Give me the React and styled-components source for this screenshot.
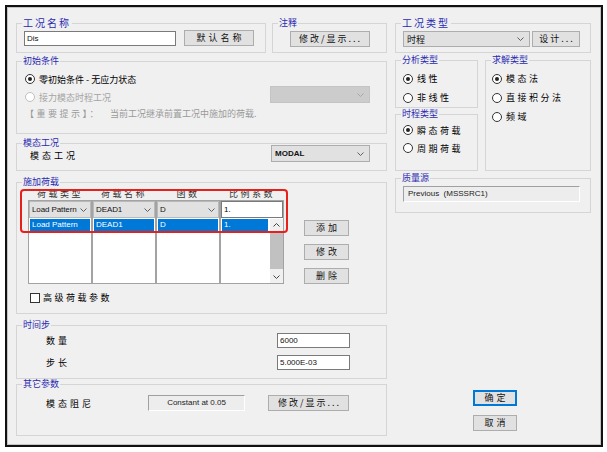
import React from "react";
import styled, { createGlobalStyle } from "styled-components";

const CJK = `"Noto Sans CJK SC", "Noto Sans CJK JP", sans-serif`;
const LATIN = `"Liberation Sans", Arial, sans-serif`;

const GlobalStyle = createGlobalStyle`
  html, body {
    margin: 0;
    padding: 0;
    background: #fff;
  }
  body {
    font-family: ${CJK};
    font-size: 9px;
    color: #000;
  }
`;

const Dialog = styled.div`
  box-sizing: border-box;
  margin: 5px 0 0 5px;
  width: 598px;
  height: 442px;
  border: 2px solid #111;
  box-shadow: inset 0 0 0 1px #c4c4c4;
  background: #f0f0f0;
  padding: 10px 10px 0 9px;
  display: grid;
  grid-template-columns: 371px 196px;
  column-gap: 8px;
  align-items: start;
`;

const Column = styled.div`
  display: flex;
  flex-direction: column;
`;

const Row = styled.div`
  display: flex;
  gap: ${(p) => p.$gap || 0}px;
  margin-top: ${(p) => p.$mt || 0}px;
`;

// group box = fieldset with its blue caption
const Group = styled.fieldset`
  box-sizing: border-box;
  position: relative;
  margin: ${(p) => p.$mt || 0}px 0 0;
  padding: 0;
  border: 1px solid #d5d5d5;
  min-width: 0;
  width: ${(p) => (p.$w ? `${p.$w}px` : "auto")};
  height: ${(p) => p.$h}px;
`;

const Legend = styled.legend`
  padding: 0 1px;
  margin-left: 5px;
  font-family: ${CJK};
  font-size: ${(p) => (p.$big ? 10 : 9)}px;
  letter-spacing: ${(p) => (p.$spaced ? 2 : 0)}px;
  line-height: 12px;
  color: #2a2ab0;
`;

const Body = styled.div`
  display: flex;
  flex-direction: ${(p) => p.$dir || "row"};
  align-items: ${(p) => p.$align || "center"};
  justify-content: ${(p) => p.$justify || "flex-start"};
  gap: ${(p) => p.$gap || 0}px;
  padding: ${(p) => p.$pad || "0"};
  margin-top: ${(p) => p.$mt || 0}px;
`;

const Button = styled.button`
  box-sizing: border-box;
  width: ${(p) => p.$w}px;
  height: 16px;
  padding: 0 0 0 ${(p) => p.$ls ?? 3}px;
  background: #e1e1e1;
  border: 1px solid ${(p) => (p.$default ? "#0078d7" : "#adadad")};
  box-shadow: ${(p) => (p.$default ? "inset 0 0 0 1px #0078d7" : "none")};
  font-family: ${CJK};
  font-size: 9px;
  letter-spacing: ${(p) => p.$ls ?? 3}px;
  line-height: 14px;
  color: #111;
  white-space: nowrap;
`;

const TextInput = styled.input`
  box-sizing: border-box;
  width: ${(p) => p.$w}px;
  height: 15px;
  padding: 0 2px;
  margin: 0;
  background: #fff;
  border: 1px solid #7a7a7a;
  font-family: ${LATIN};
  font-size: 8px;
  color: #111;
  outline: none;
`;

const SelectBox = styled.div`
  box-sizing: border-box;
  width: ${(p) => (p.$w ? `${p.$w}px` : "100%")};
  height: ${(p) => p.$h || 17}px;
  margin-top: ${(p) => p.$mt || 0}px;
  display: flex;
  align-items: center;
  justify-content: space-between;
  padding: 0 5px 0 3px;
  background: ${(p) => (p.$disabled ? "#cccccc" : "#e1e1e1")};
  border: 1px solid ${(p) => (p.$disabled ? "#c4c4c4" : "#adadad")};
  font-family: ${(p) => (p.$cjk ? CJK : LATIN)};
  font-size: ${(p) => (p.$cjk ? 9 : 8)}px;
  font-weight: ${(p) => (p.$bold ? "bold" : "normal")};
  color: #111;
  white-space: nowrap;
`;

const Chevron = ({ up, color = "#606060" }) => (
  <svg width="7" height="4" viewBox="0 0 7 4" style={{ flex: "none" }}>
    <path
      d={up ? "M0.5 3.5 L3.5 0.5 L6.5 3.5" : "M0.5 0.5 L3.5 3.5 L6.5 0.5"}
      fill="none"
      stroke={color}
      strokeWidth="1"
    />
  </svg>
);

const Select = ({ children, disabled, ...rest }) => (
  <SelectBox $disabled={disabled} {...rest}>
    <span>{children}</span>
    <Chevron color={disabled ? "#a8a8a8" : "#606060"} />
  </SelectBox>
);

const RadioRow = styled.div`
  display: flex;
  align-items: center;
  gap: 4px;
  height: ${(p) => p.$h || 19}px;
  color: ${(p) => (p.$disabled ? "#a4a4a4" : "#000")};
  letter-spacing: ${(p) => (p.$spaced ? 2.5 : 0)}px;
`;

const RadioDot = styled.span`
  box-sizing: border-box;
  width: 10px;
  height: 10px;
  border-radius: 50%;
  border: 1px solid ${(p) => (p.$disabled ? "#c0c0c0" : "#333")};
  background: #fff;
  display: flex;
  align-items: center;
  justify-content: center;
  flex: none;

  &::after {
    content: "";
    width: 4px;
    height: 4px;
    border-radius: 50%;
    background: ${(p) => (p.$checked ? "#222" : "transparent")};
  }
`;

const Radio = ({ label, checked, disabled, spaced, h }) => (
  <RadioRow $disabled={disabled} $spaced={spaced} $h={h}>
    <RadioDot $checked={checked} $disabled={disabled} />
    <span>{label}</span>
  </RadioRow>
);

const Hint = styled.div`
  display: flex;
  align-items: center;
  height: 14px;
  color: #9a9a9a;
`;

const HintTag = styled.span`
  width: 85px;
  letter-spacing: 2.5px;
`;

const SpacedText = styled.span`
  display: inline-block;
  width: ${(p) => (p.$w ? `${p.$w}px` : "auto")};
  letter-spacing: ${(p) => p.$ls ?? 3}px;
  padding-top: ${(p) => p.$pt || 0}px;
  color: ${(p) => p.$color || "#000"};
  flex: none;
`;

const TableArea = styled.div`
  position: relative;
  width: 256px;
  display: flex;
  flex-direction: column;
`;

const HeaderRow = styled.div`
  display: grid;
  grid-template-columns: repeat(4, 1fr);
  height: 12px;
  line-height: 12px;
  text-align: center;
  letter-spacing: 2.5px;
  color: #333;
`;

const Table = styled.div`
  box-sizing: border-box;
  height: 84px;
  display: grid;
  grid-template-columns: repeat(4, 1fr);
  gap: 2px;
  border: 1px solid #a3a3a3;
  background: #a3a3a3;
`;

const TableColumn = styled.div`
  display: flex;
  flex-direction: column;
  background: #fff;
  min-width: 0;
`;

const CellSelect = styled(SelectBox)`
  padding: 0 3px 0 2px;
  border-color: #b9b9b9;
  letter-spacing: -0.1px;
`;

const CellInput = styled.div`
  box-sizing: border-box;
  height: 17px;
  padding: 0 2px;
  display: flex;
  align-items: center;
  border: 1px solid #7a7a7a;
  font-family: ${LATIN};
  font-size: 8px;
`;

const SelectedCell = styled.div`
  flex: ${(p) => (p.$grow ? 1 : "none")};
  height: 12px;
  margin: 1px ${(p) => (p.$grow ? 2 : 1)}px 0 1px;
  padding-left: 2px;
  background: #0078d7;
  color: #fff;
  font-family: ${LATIN};
  font-size: 8px;
  line-height: 12px;
  white-space: nowrap;
`;

const ScrollRow = styled.div`
  flex: 1;
  display: flex;
  align-items: flex-start;
`;

const Scrollbar = styled.div`
  align-self: stretch;
  width: 13px;
  margin-top: 1px;
  display: flex;
  flex-direction: column;
  background: #f0f0f0;
`;

const ScrollArrow = styled.div`
  height: 12px;
  display: flex;
  align-items: center;
  justify-content: center;
`;

const ScrollThumb = styled.div`
  height: 38px;
  background: #c1c1c1;
`;

const ScrollTrack = styled.div`
  flex: 1;
`;

const CheckRow = styled.div`
  display: flex;
  align-items: center;
  gap: 3px;
  margin-top: 8px;
  padding-left: 2px;
  height: 11px;
  letter-spacing: 2.5px;
`;

const CheckBox = styled.span`
  box-sizing: border-box;
  width: 10px;
  height: 10px;
  border: 1px solid #333;
  background: #fff;
`;

const Highlight = styled.div`
  position: absolute;
  left: -8px;
  top: 1px;
  width: 268px;
  height: 44px;
  box-sizing: border-box;
  border: 2px solid #e8201c;
  border-radius: 4px;
  pointer-events: none;
`;

const SunkenField = styled.div`
  box-sizing: border-box;
  width: ${(p) => p.$w}px;
  height: 16px;
  padding: ${(p) => (p.$center ? "0" : "1px 0 0 4px")};
  text-align: ${(p) => (p.$center ? "center" : "left")};
  line-height: ${(p) => (p.$center ? 13 : 11)}px;
  background: #ededed;
  border-top: 1px solid #a0a0a0;
  border-left: 1px solid #a0a0a0;
  border-right: 1px solid #fff;
  border-bottom: 1px solid #fff;
  font-family: ${LATIN};
  font-size: 8px;
  color: #222;
  white-space: pre;
`;

const loadColumns = [
  { head: "荷载类型", value: "Load Pattern" },
  { head: "荷载名称", value: "DEAD1" },
  { head: "函数", value: "D" },
];

export default function App() {
  return (
    <>
      <GlobalStyle />
      <Dialog>
        <Column>
          <Row $gap={6}>
            <Group $w={250} $h={36}>
              <Legend $big $spaced>工况名称</Legend>
              <Body $gap={8} $pad="1px 0 0 7px">
                <TextInput $w={152} readOnly value="Dis" />
                <Button $w={70}>默认名称</Button>
              </Body>
            </Group>
            <Group $w={115} $h={36}>
              <Legend>注释</Legend>
              <Body $justify="center" $pad="2px 0 0 0">
                <Button $w={80} $ls={2}>修改/显示...</Button>
              </Body>
            </Group>
          </Row>

          <Group $mt={2} $h={79}>
            <Legend>初始条件</Legend>
            <Body $align="flex-start" $justify="space-between" $pad="3px 16px 0 8px">
              <Body $dir="column" $align="stretch">
                <Radio h={18} checked label="零初始条件 - 无应力状态" />
                <Radio h={18} disabled label="接力模态时程工况" />
                <Hint>
                  <HintTag>【重要提示】：</HintTag>
                  <span>当前工况继承前置工况中施加的荷载.</span>
                </Hint>
              </Body>
              <Select disabled $w={100} $mt={16}>{""}</Select>
            </Body>
          </Group>

          <Group $mt={3} $h={34}>
            <Legend>模态工况</Legend>
            <Body $justify="space-between" $pad="0 16px 0 13px" $mt={-4}>
              <SpacedText $pt={3}>模态工况</SpacedText>
              <Select $w={99} $bold>MODAL</Select>
            </Body>
          </Group>

          <Group $mt={5} $h={138}>
            <Legend>施加荷载</Legend>
            <Body $align="flex-start" $pad="0 0 0 11px">
              <TableArea>
                <HeaderRow>
                  {loadColumns.map((c) => (
                    <span key={c.head}>{c.head}</span>
                  ))}
                  <span>比例系数</span>
                </HeaderRow>
                <Table>
                  {loadColumns.map((c) => (
                    <TableColumn key={c.head}>
                      <CellSelect>
                        <span>{c.value}</span>
                        <Chevron />
                      </CellSelect>
                      <SelectedCell>{c.value}</SelectedCell>
                    </TableColumn>
                  ))}
                  <TableColumn>
                    <CellInput>1.</CellInput>
                    <ScrollRow>
                      <SelectedCell $grow>1.</SelectedCell>
                      <Scrollbar>
                        <ScrollArrow>
                          <Chevron up color="#444" />
                        </ScrollArrow>
                        <ScrollThumb />
                        <ScrollTrack />
                        <ScrollArrow>
                          <Chevron color="#444" />
                        </ScrollArrow>
                      </Scrollbar>
                    </ScrollRow>
                  </TableColumn>
                </Table>
                <CheckRow>
                  <CheckBox />
                  <span>高级荷载参数</span>
                </CheckRow>
                <Highlight />
              </TableArea>
              <Body $dir="column" $gap={8} $pad="32px 0 0 20px">
                <Button $w={45}>添加</Button>
                <Button $w={45}>修改</Button>
                <Button $w={45}>删除</Button>
              </Body>
            </Body>
          </Group>

          <Group $mt={5} $h={60}>
            <Legend>时间步</Legend>
            <Body $dir="column" $align="stretch" $gap={7} $pad="2px 0 0 29px">
              <Body>
                <SpacedText $w={231}>数量</SpacedText>
                <TextInput $w={73} readOnly value="6000" />
              </Body>
              <Body>
                <SpacedText $w={231}>步长</SpacedText>
                <TextInput $w={73} readOnly value="5.000E-03" />
              </Body>
            </Body>
          </Group>

          <Group $mt={-1} $h={58}>
            <Legend>其它参数</Legend>
            <Body $pad="5px 0 0 29px">
              <SpacedText $w={102}>模态阻尼</SpacedText>
              <SunkenField $w={97} $center>Constant at 0.05</SunkenField>
              <Body $pad="0 0 0 23px">
                <Button $w={81} $ls={2}>修改/显示...</Button>
              </Body>
            </Body>
          </Group>
        </Column>

        <Column>
          <Group $h={36}>
            <Legend $big $spaced>工况类型</Legend>
            <Body $gap={2} $pad="2px 0 0 7px">
              <Select $w={127} $h={16} $cjk>时程</Select>
              <Button $w={48} $ls={2}>设计...</Button>
            </Body>
          </Group>

          <Row $gap={7} $mt={1}>
            <Column>
              <Group $w={83} $h={54}>
                <Legend>分析类型</Legend>
                <Body $dir="column" $align="stretch" $pad="3px 0 0 7px">
                  <Radio spaced checked label="线性" />
                  <Radio spaced label="非线性" />
                </Body>
              </Group>
              <Group $w={83} $h={63}>
                <Legend>时程类型</Legend>
                <Body $dir="column" $align="stretch" $pad="1px 0 0 7px">
                  <Radio spaced h={18} checked label="瞬态荷载" />
                  <Radio spaced h={18} label="周期荷载" />
                </Body>
              </Group>
            </Column>
            <Group $w={106} $h={117}>
              <Legend>求解类型</Legend>
              <Body $dir="column" $align="stretch" $pad="3px 0 0 6px">
                <Radio spaced checked label="模态法" />
                <Radio spaced label="直接积分法" />
                <Radio spaced label="频域" />
              </Body>
            </Group>
          </Row>

          <Group $mt={1} $h={41}>
            <Legend>质量源</Legend>
            <Body $pad="2px 0 0 7px">
              <SunkenField $w={177}>Previous  (MSSSRC1)</SunkenField>
            </Body>
          </Group>

          <Body $dir="column" $align="flex-start" $gap={9} $pad="0 0 0 78px" $mt={177}>
            <Button $w={44} $default>确定</Button>
            <Button $w={44}>取消</Button>
          </Body>
        </Column>
      </Dialog>
    </>
  );
}
